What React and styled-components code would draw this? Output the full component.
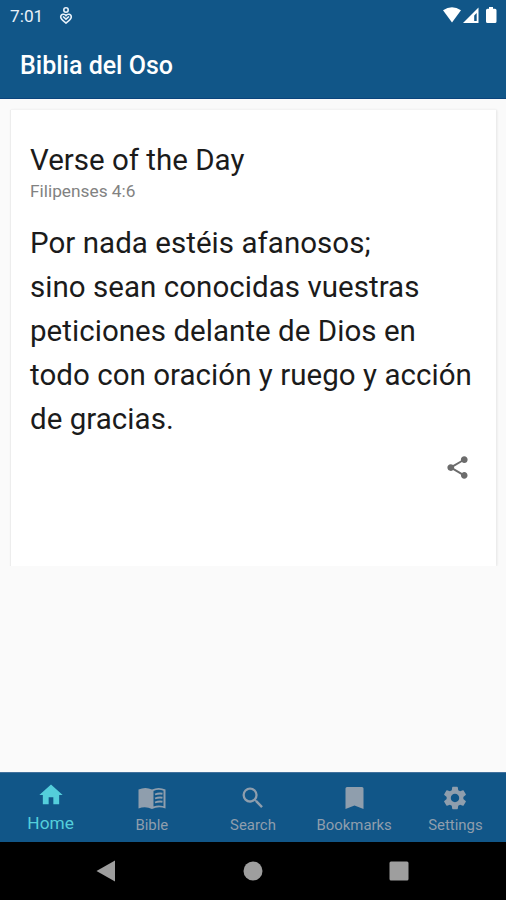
import React from 'react';
import styled, { createGlobalStyle } from 'styled-components';
import { MdHome, MdSearch, MdSettings, MdShare } from 'react-icons/md';

const GlobalStyle = createGlobalStyle`
  body {
    margin: 0;
    background: #fafafa;
    font-family: Roboto, "Liberation Sans", sans-serif;
  }
`;

const Screen = styled.div`
  display: flex;
  flex-direction: column;
  width: 506px;
  height: 900px;
  overflow: hidden;
  background: #fafafa;
`;

const Header = styled.header`
  height: 99px;
  flex: none;
  background: #115688;
  border-bottom: 1px solid #0b447c;
  box-sizing: border-box;
  color: #fff;
`;

const StatusBar = styled.div`
  display: flex;
  align-items: center;
  height: 32px;
  padding: 0 8px 0 10px;
`;

const Clock = styled.span`
  width: 48px;
  font-size: 17.3px;
  color: #e8f1fa;
`;

const StatusIcons = styled.div`
  display: flex;
  align-items: center;
  margin-left: auto;
`;

const Title = styled.h1`
  margin: 0;
  padding-left: 20px;
  font-size: 25px;
  line-height: 68px;
  font-weight: 500;
`;

const Content = styled.main`
  flex: 1;
  padding: 11px 10px 0 11px;
`;

const Card = styled.section`
  display: flex;
  flex-direction: column;
  box-sizing: border-box;
  height: 456px;
  padding: 32px 25px 0 19px;
  background: #fff;
  box-shadow: 0 -1px 1px #f3f3f3, -1px 0 1px #ececec, 1px 0 2px #e4e4e4;
  clip-path: inset(-3px -3px 0 -3px);
  color: #1b1b1b;
`;

const CardTitle = styled.h2`
  margin: 0;
  font-size: 29.5px;
  line-height: 36px;
  font-weight: 400;
`;

const Reference = styled.div`
  font-size: 17.3px;
  line-height: 26px;
  color: #828282;
`;

const Verse = styled.p`
  margin: 17px 0 0;
  font-size: 29.5px;
  line-height: 44px;
  letter-spacing: 0.04px;
  white-space: nowrap;
`;

const ShareButton = styled.button`
  display: flex;
  align-self: flex-end;
  margin: 13px 0 0;
  padding: 0;
  border: 0;
  background: none;
  color: #6c6c6c;
`;

const TabBar = styled.nav`
  display: grid;
  grid-template-columns: repeat(5, 1fr);
  flex: none;
  height: 70px;
  box-sizing: border-box;
  border-top: 1px solid #41719d;
  background: #115688;
`;

const Tab = styled.div`
  display: flex;
  flex-direction: column;
  align-items: center;
  padding-top: ${({ $active }) => ($active ? '8px' : '11px')};
  font-size: ${({ $active }) => ($active ? '17.3px' : '14.9px')};
  line-height: 18px;
  color: ${({ $active }) => ($active ? '#54cedb' : '#8f9ead')};
  > svg {
    margin-bottom: ${({ $active }) => ($active ? '5px' : '4px')};
  }
`;

const SystemBar = styled.div`
  display: flex;
  align-items: center;
  justify-content: space-between;
  flex: none;
  box-sizing: border-box;
  height: 58px;
  padding: 0 97px 0 96px;
  background: #000;
`;

const BookIcon = ({ size }) => (
  <svg width={size} height={size} viewBox="0 0 28 28">
    <path
      fill="currentColor"
      d="M0.5 5.5Q7.5 2.5 14 5.5Q20.5 2.5 27.5 5.5V24.5Q20.5 22 14 25Q7.5 22 0.5 24.5Z"
    />
    <path fill="#115688" d="M15.5 7Q20.5 4.8 25.5 6.8V22.3Q20.5 20.8 15.5 22.5Z" />
    <path
      fill="none"
      stroke="currentColor"
      strokeWidth="1.9"
      d="M17 10.5Q20.5 9 24.5 9.7M17 14.5Q20.5 13 24.5 13.7M17 18.5Q20.5 17 24.5 17.7"
    />
  </svg>
);

const BookmarkIcon = ({ size }) => (
  <svg width={size} height={size} viewBox="0 0 28 28" fill="currentColor">
    <path d="M7 3H22Q23.5 3 23.5 4.5V25L14.5 21.5L5.5 25V4.5Q5.5 3 7 3Z" />
  </svg>
);

const tabs = [
  { label: 'Home', Icon: MdHome, active: true },
  { label: 'Bible', Icon: BookIcon },
  { label: 'Search', Icon: MdSearch },
  { label: 'Bookmarks', Icon: BookmarkIcon },
  { label: 'Settings', Icon: MdSettings },
];

const verse = [
  'Por nada estéis afanosos;',
  'sino sean conocidas vuestras',
  'peticiones delante de Dios en',
  'todo con oración y ruego y acción',
  'de gracias.',
];

const HeartPerson = () => (
  <svg width="16" height="20" viewBox="0 0 16 20" fill="none" stroke="#e8f1fa" strokeWidth="1.6">
    <circle cx="8" cy="4" r="2.2" />
    <path d="M8 9.5C6.5 7.4 2.7 7.9 2.7 11C2.7 13.1 5 14.7 8 17.1C11 14.7 13.3 13.1 13.3 11C13.3 7.9 9.5 7.4 8 9.5Z" />
    <path d="M5 10.5L8 13.1L11 10.5" />
  </svg>
);

const StatusGlyphs = () => (
  <svg width="55" height="20" viewBox="0 0 55 20" fill="#fff">
    <path d="M0 4.2Q9 -1.7 18 4.2L9 16.5Z" />
    <path d="M20 17L35.5 1.5V17Z" />
    <path d="M31.2 9.5L33.7 7V15H31.2Z" fill="#115688" />
    <path d="M46 1h4v1.7h2q1.5 0 1.5 1.5V15.5Q53.5 17 52 17H44.5Q43 17 43 15.5V4.2Q43 2.7 44.5 2.7H46Z" />
  </svg>
);

const App = () => (
  <>
    <GlobalStyle />
    <Screen>
      <Header>
        <StatusBar>
          <Clock>7:01</Clock>
          <HeartPerson />
          <StatusIcons>
            <StatusGlyphs />
          </StatusIcons>
        </StatusBar>
        <Title>Biblia del Oso</Title>
      </Header>
      <Content>
        <Card>
          <CardTitle>Verse of the Day</CardTitle>
          <Reference>Filipenses 4:6</Reference>
          <Verse>
            {verse.map(line => (
              <React.Fragment key={line}>
                {line}
                <br />
              </React.Fragment>
            ))}
          </Verse>
          <ShareButton aria-label="Share">
            <MdShare size={27} />
          </ShareButton>
        </Card>
      </Content>
      <TabBar>
        {tabs.map(({ label, Icon, active }) => (
          <Tab key={label} $active={active}>
            <Icon size={28} />
            {label}
          </Tab>
        ))}
      </TabBar>
      <SystemBar>
        <svg width="20" height="22" viewBox="0 0 20 22" fill="#9e9e9e">
          <path d="M0.5 11L19 0.5V21.5Z" />
        </svg>
        <svg width="20" height="20" viewBox="0 0 20 20" fill="#9e9e9e">
          <circle cx="10" cy="10" r="9.5" />
        </svg>
        <svg width="20" height="20" viewBox="0 0 20 20" fill="#9e9e9e">
          <rect x="0.5" y="0.5" width="19" height="19" rx="1.5" />
        </svg>
      </SystemBar>
    </Screen>
  </>
);

export default App;
